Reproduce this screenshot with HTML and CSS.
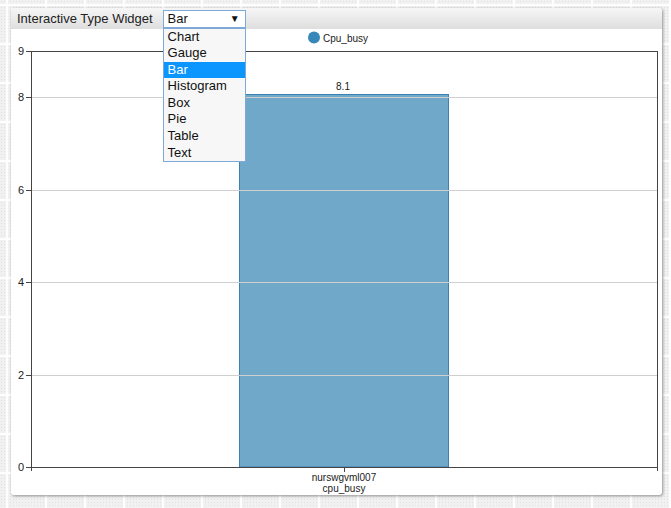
FILE: index.html
```html
<!DOCTYPE html>
<html>
<head>
<meta charset="utf-8">
<link rel="stylesheet" href="styles.css">
</head>
<body>
<div class="widget">
  <div class="header">
    <span class="title">Interactive Type Widget</span>
    <div class="select">
      <span class="value">Bar</span>
      <span class="arrow">▼</span>
      <ul class="options">
        <li>Chart</li>
        <li>Gauge</li>
        <li class="active">Bar</li>
        <li>Histogram</li>
        <li>Box</li>
        <li>Pie</li>
        <li>Table</li>
        <li>Text</li>
      </ul>
    </div>
  </div>
  <svg class="chart" width="651" height="466" viewBox="0 0 651 466">
    <g class="legend">
      <circle cx="303" cy="8.5" r="6" fill="#3787b8"/>
      <text x="312" y="12.5">Cpu_busy</text>
    </g>
    <rect x="228.5" y="65.5" width="209" height="372.5" fill="#6fa8c8" stroke="#3a82b2" stroke-width="1"/>
    <g class="grid" stroke="#cfcfcf" stroke-width="1">
      <line x1="20" y1="68.5" x2="646" y2="68.5"/>
      <line x1="20" y1="161.5" x2="646" y2="161.5"/>
      <line x1="20" y1="253.5" x2="646" y2="253.5"/>
      <line x1="20" y1="346.5" x2="646" y2="346.5"/>
    </g>
    <g class="axis" stroke="#444" stroke-width="1" fill="none">
      <line x1="20" y1="22.5" x2="646" y2="22.5"/>
      <line x1="20.5" y1="22" x2="20.5" y2="442"/>
      <line x1="646.5" y1="22" x2="646.5" y2="442"/>
      <line x1="15" y1="438.5" x2="647" y2="438.5"/>
      <line x1="15" y1="22.5" x2="20" y2="22.5"/>
      <line x1="15" y1="68.5" x2="20" y2="68.5"/>
      <line x1="15" y1="161.5" x2="20" y2="161.5"/>
      <line x1="15" y1="253.5" x2="20" y2="253.5"/>
      <line x1="15" y1="346.5" x2="20" y2="346.5"/>
      <line x1="333.5" y1="438" x2="333.5" y2="443"/>
    </g>
    <g class="ylabels">
      <text x="13" y="26">9</text>
      <text x="13" y="72">8</text>
      <text x="13" y="165">6</text>
      <text x="13" y="257">4</text>
      <text x="13" y="350">2</text>
      <text x="13" y="442">0</text>
    </g>
    <text class="value-label" x="332" y="61">8.1</text>
    <text class="xlabel" x="333" y="452">nurswgvml007</text>
    <text class="xlabel" x="333" y="463">cpu_busy</text>
  </svg>
</div>
</body>
</html>
```

FILE: styles.css
```css
html, body {
  margin: 0;
  padding: 0;
}
body {
  width: 671px;
  height: 508px;
  overflow: hidden;
  background-color: #f1f1f1;
  background-image:
    linear-gradient(90deg, rgba(255,255,255,0.95) 2px, transparent 2px),
    linear-gradient(0deg, rgba(255,255,255,0.95) 2px, transparent 2px),
    radial-gradient(circle, #e0e0e0 0.6px, transparent 0.9px);
  background-size: 39px 39px, 39px 39px, 3px 3px;
  background-position: 6px 0, 0 6px, 0 0;
  font-family: "Liberation Sans", Arial, sans-serif;
  padding-top: 8px;
  box-sizing: border-box;
}
.widget {
  margin-left: 11px;
  width: 651px;
  height: 487px;
  background: #fff;
  border-radius: 3px;
  box-shadow: 1px 1px 3px rgba(0,0,0,0.4);
}
.header {
  height: 21px;
  display: flex;
  align-items: center;
  padding-left: 6px;
  background: linear-gradient(#f6f6f6, #dedede);
  border-radius: 3px 3px 0 0;
  position: relative;
  z-index: 2;
}
.title {
  font-size: 13px;
  color: #222;
}
.select {
  position: relative;
  margin-left: 10px;
  height: 16px;
  border: 1px solid #7ea9d9;
  background: #fff;
  display: flex;
  align-items: center;
  justify-content: space-between;
  padding: 0 5px 0 4px;
  box-sizing: content-box;
  width: 72px;
}
.value {
  font-size: 13px;
  color: #111;
}
.arrow {
  font-size: 10px;
  color: #111;
}
.options {
  position: absolute;
  left: -1px;
  top: 17px;
  width: 81px;
  margin: 0;
  padding: 0;
  list-style: none;
  background: #f7f7f7;
  border: 1px solid #7ea9d9;
}
.options li {
  height: 16.6px;
  line-height: 16.6px;
  font-size: 13px;
  color: #111;
  padding-left: 4px;
}
.options li.active {
  background: #0a95ff;
  color: #fff;
}
.chart {
  display: block;
}
.chart text {
  font-family: "Liberation Sans", Arial, sans-serif;
  font-size: 10px;
  fill: #222;
}
.ylabels text {
  text-anchor: end;
  font-size: 11px;
}
.value-label, .xlabel {
  text-anchor: middle;
}
```
